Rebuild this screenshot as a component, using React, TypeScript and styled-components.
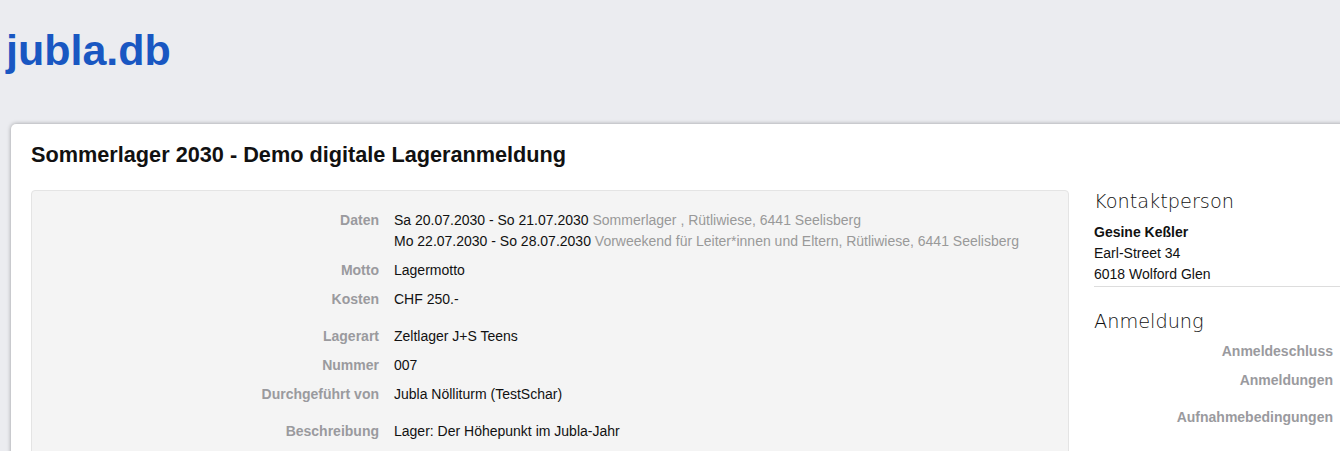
import styled, { createGlobalStyle } from 'styled-components'

const GlobalStyle = createGlobalStyle`
  html, body {
    margin: 0;
    padding: 0;
    background: #ebecf0;
    overflow: hidden;
  }
  body {
    font-family: "Liberation Sans", Arial, sans-serif;
    font-size: 14px;
    color: #111;
  }
`

const Page = styled.div`
  width: 1340px;
  height: 451px;
  overflow: hidden;
`

const Header = styled.header`
  height: 124px;
  padding-left: 6px;
  box-sizing: border-box;
`

const Logo = styled.div`
  font-family: "Liberation Sans", Arial, sans-serif;
  font-weight: bold;
  font-size: 43px;
  color: #1957c2;
  line-height: 1;
  padding-top: 29px;
`

const Card = styled.main`
  margin-left: 11px;
  width: 1500px;
  min-height: 400px;
  background: #fff;
  border-radius: 5px 0 0 0;
  box-shadow: 0 0 4px rgba(0, 0, 0, 0.35);
  padding: 20px 20px 0 20px;
  box-sizing: border-box;
`

const Title = styled.h1`
  margin: 0;
  font-family: "Liberation Sans", Arial, sans-serif;
  font-weight: bold;
  font-size: 21.7px;
  line-height: 22px;
  color: #111;
`

const Columns = styled.div`
  display: flex;
  gap: 25px;
  margin-top: 24px;
`

const Panel = styled.section`
  width: 1038px;
  box-sizing: border-box;
  flex: none;
  background: #f4f4f4;
  border: 1px solid #e4e4e4;
  border-radius: 4px;
  padding: 19px 0 30px 0;
  min-height: 300px;
`

const List = styled.dl<{ $labelWidth: number }>`
  display: grid;
  grid-template-columns: ${(p) => p.$labelWidth}px 1fr;
  column-gap: 15px;
  margin: 0;
`

const Label = styled.dt<{ $gapBefore?: boolean }>`
  text-align: right;
  font-weight: bold;
  color: #9a9a9e;
  line-height: 21px;
  margin-bottom: 8px;
  margin-top: ${(p) => (p.$gapBefore ? '8px' : '0')};
`

const Value = styled.dd<{ $gapBefore?: boolean }>`
  margin: 0 0 8px 0;
  margin-top: ${(p) => (p.$gapBefore ? '8px' : '0')};
  line-height: 21px;
  min-height: 21px;
`

const Muted = styled.span`
  color: #999;
`

const Side = styled.aside`
  width: 400px;
  flex: none;
`

const SideHeading = styled.h2<{ $below: number }>`
  margin: 0 0 ${(p) => p.$below}px 0;
  font-family: "DejaVu Sans", sans-serif;
  font-weight: 200;
  font-size: 19.3px;
  line-height: 24px;
  color: #111;
`

const Contact = styled.div`
  line-height: 21px;
  padding-bottom: 1px;
  border-bottom: 1px solid #ddd;
  width: 246px;
  margin-bottom: 23px;
`

const Name = styled.div`
  font-weight: bold;
`

const rows = [
  {
    label: 'Daten',
    value: (
      <>
        Sa 20.07.2030 - So 21.07.2030 <Muted>Sommerlager , Rütliwiese, 6441 Seelisberg</Muted>
        <br />
        Mo 22.07.2030 - So 28.07.2030{' '}
        <Muted>Vorweekend für Leiter*innen und Eltern, Rütliwiese, 6441 Seelisberg</Muted>
      </>
    ),
  },
  { label: 'Motto', value: 'Lagermotto' },
  { label: 'Kosten', value: 'CHF 250.-' },
  { label: 'Lagerart', value: 'Zeltlager J+S Teens', gap: true },
  { label: 'Nummer', value: '007' },
  { label: 'Durchgeführt von', value: 'Jubla Nölliturm (TestSchar)' },
  { label: 'Beschreibung', value: 'Lager: Der Höhepunkt im Jubla-Jahr', gap: true },
]

const signup = [
  { label: 'Anmeldeschluss', value: '' },
  { label: 'Anmeldungen', value: '' },
  { label: 'Aufnahmebedingungen', value: '', gap: true },
]

export default function App() {
  return (
    <Page>
      <GlobalStyle />
      <Header>
        <Logo>jubla.db</Logo>
      </Header>
      <Card>
        <Title>Sommerlager 2030 - Demo digitale Lageranmeldung</Title>
        <Columns>
          <Panel>
            <List $labelWidth={347}>
              {rows.map((r) => (
                <>
                  <Label key={r.label} $gapBefore={r.gap}>{r.label}</Label>
                  <Value $gapBefore={r.gap}>{r.value}</Value>
                </>
              ))}
            </List>
          </Panel>
          <Side>
            <SideHeading $below={8}>Kontaktperson</SideHeading>
            <Contact>
              <Name>Gesine Keßler</Name>
              <div>Earl-Street 34</div>
              <div>6018 Wolford Glen</div>
            </Contact>
            <SideHeading $below={7}>Anmeldung</SideHeading>
            <List $labelWidth={239}>
              {signup.map((r) => (
                <>
                  <Label key={r.label} $gapBefore={r.gap}>{r.label}</Label>
                  <Value $gapBefore={r.gap}>{r.value}</Value>
                </>
              ))}
            </List>
          </Side>
        </Columns>
      </Card>
    </Page>
  )
}
